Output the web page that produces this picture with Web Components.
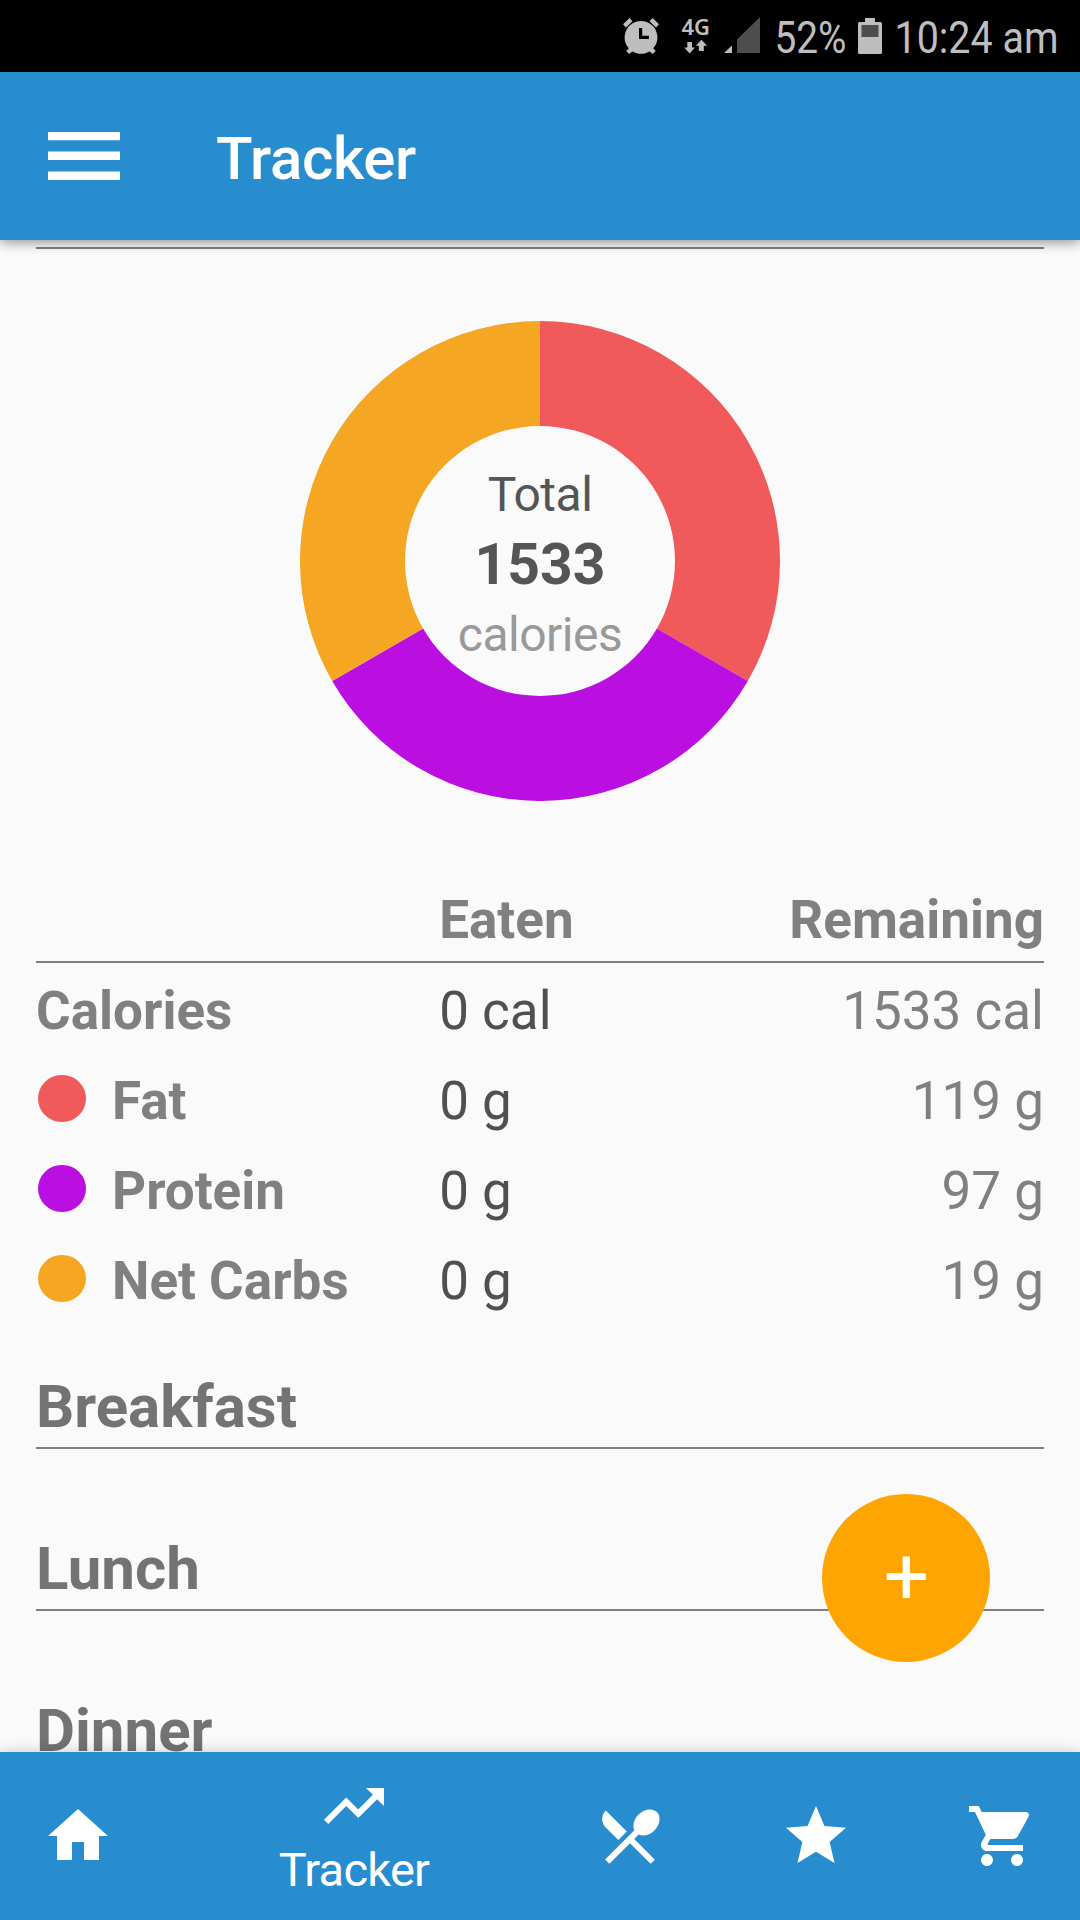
<!DOCTYPE html>
<html lang="en">
<head>
<meta charset="utf-8">
<title>Tracker</title>
<style>
body{margin:0;background:#fafafa;font-family:Roboto,"Liberation Sans",sans-serif}
</style>
</head>
<body>
<tracker-app></tracker-app>
<script>
function define(name, html){
  customElements.define(name, class extends HTMLElement{
    constructor(){
      super();
      this.attachShadow({mode:'open'}).innerHTML = typeof html === 'function' ? html(this) : html;
    }
  });
}

define('status-bar', `<style>
:host{display:block;height:72px;background:#000}
svg{display:block;overflow:visible}
text{font-family:Roboto,sans-serif;fill:#bebebe}
</style>
<svg width="1080" height="72" viewBox="0 0 1080 72" fill="#bebebe">
  <g>
    <path fill-rule="evenodd" d="M641 21a16.4 16.4 0 1 0 .01 0zM639 28h3.200v7.800h6.800v3.200h-10z"/>
    <path d="M629.500 18l3 3.200-6.500 6.300-3-3.300zM652.500 18l-3 3.200 6.500 6.300 3-3.300zM630 47l3.600 3.600-4.400 3.400-3-3zM652 47l-3.600 3.600 4.400 3.400 3-3z"/>
  </g>
  <text x="681.500" y="35.300" style="font-family:'Noto Sans','Open Sans',sans-serif;font-size:22px;font-weight:600" textLength="28.500" lengthAdjust="spacingAndGlyphs">4G</text>
  <path d="M687.300 42h4.700v5.500h3l-5.400 6-5.400-6h3.100zM698.800 51h5v-5.300h3.200l-5.500-6-5.800 6h3.100z"/>
  <path d="M732 45.500V53h-8z"/>
  <path fill="#4d4d4d" d="M760 17v36h-23V39.500z"/>
  <text x="774.500" y="53.300" font-size="45" textLength="72" lengthAdjust="spacingAndGlyphs">52%</text>
  <path d="M865 18h10v4h5.500q1.500 0 1.500 1.500v29q0 1.500-1.500 1.500h-21q-1.500 0-1.500-1.500v-29q0-1.500 1.500-1.500h5.500z"/>
  <path fill="#4d4d4d" d="M861.500 25h17v12h-17z"/>
  <text x="894.500" y="53.300" font-size="45" textLength="164" lengthAdjust="spacingAndGlyphs">10:24 am</text>
</svg>`);

define('app-bar', `<style>
:host{display:flex;align-items:center;height:168px;box-sizing:border-box;padding-left:48px;background:#288dcf;color:#fff;position:relative;z-index:2;box-shadow:0 2px 12px rgba(0,0,0,.45)}
svg{display:block;width:72px;height:48px}
h1{margin:5px 0 0 96px;font-size:60px;line-height:72px;font-weight:500;letter-spacing:-.35px}
</style>
<svg viewBox="0 0 72 48" fill="#fff"><path d="M0 0h72v8.300H0zM0 19.600h72v8.300H0zM0 39.600h72V48H0z"/></svg>
<h1><slot></slot></h1>`);

define('macro-donut', `<style>
:host{display:grid;justify-content:center;margin-top:72px}
svg,.mid{grid-area:1/1}
svg{display:block}
.mid{display:flex;flex-direction:column;align-items:center;padding-top:140.500px;font-size:48px;line-height:65px;color:#555;letter-spacing:-.5px}
b{font-size:57px;line-height:70px;margin:3px 0 2px;letter-spacing:0}
.unit{color:#999}
</style>
<svg width="480" height="480" viewBox="-240 -240 480 480">
  <path fill="#f15a5a" d="M0-240A240 240 0 0 1 207.850 120L116.900 67.500A135 135 0 0 0 0-135z"/>
  <path fill="#ba0fe0" d="M207.850 120A240 240 0 0 1-207.850 120L-116.900 67.500A135 135 0 0 0 116.900 67.500z"/>
  <path fill="#f5a623" d="M-207.850 120A240 240 0 0 1 0-240V-135A135 135 0 0 0-116.900 67.500z"/>
</svg>
<div class="mid"><slot name="top"></slot><b><slot></slot></b><span class="unit"><slot name="unit"></slot></span></div>`);

define('macro-head', `<style>
:host{display:grid;grid-template-columns:40% 20% 40%;margin-top:87px;height:73px;border-bottom:2px solid #808080;font-size:53px;line-height:64px;font-weight:700;color:#808080;margin-bottom:2.500px}
.r{text-align:right}
</style><span></span><span><slot name="eaten"></slot></span><span class="r"><slot name="left"></slot></span>`);

define('macro-row', el => `<style>
:host{display:grid;grid-template-columns:40% 20% 40%;height:90px;line-height:90px;font-size:53px;color:#808080}
.name{display:flex;align-items:center;font-weight:700;white-space:nowrap}
i{width:47.500px;height:47.500px;border-radius:50%;margin:0 26.500px 4.500px 2px;background:${el.getAttribute('dot')}}
.e{color:#505050}.r{text-align:right}
</style><span class="name">${el.hasAttribute('dot') ? '<i></i>' : ''}<slot></slot></span><span class="e"><slot name="eaten"></slot></span><span class="r"><slot name="left"></slot></span>`);

define('meal-section', `<style>
:host{display:block;padding:46.500px 0 4.500px;margin-bottom:39px;border-bottom:2px solid #808080;color:#737373}
h2{margin:0;font-size:60px;line-height:70px;font-weight:700}
</style><h2><slot></slot></h2>`);

define('add-button', `<style>
:host{display:flex;align-items:center;justify-content:center;position:absolute;left:822px;top:1494px;width:168px;height:168px;box-sizing:border-box;padding:0 0 3px 1px;border-radius:50%;background:#ffa502;color:#fff;z-index:1;font-size:80px;line-height:80px}
</style><slot></slot>`);

const icons = {
  home:'M10 20v-6h4v6h5v-8h3L12 3 2 12h3v8z',
  trend:'M16 6l2.290 2.290-4.880 4.880-4-4L2 16.590 3.410 18l6-6 4 4 6.300-6.290L22 12V6z',
  food:'M8.100 13.340l2.830-2.830L3.910 3.500c-1.560 1.560-1.560 4.090 0 5.660l4.190 4.180zm6.780-1.810c1.530.71 3.680.21 5.270-1.380 1.910-1.910 2.280-4.650.81-6.120-1.460-1.460-4.200-1.100-6.120.81-1.590 1.590-2.090 3.740-1.380 5.270L3.700 19.870l1.410 1.410L12 14.410l6.880 6.880 1.410-1.410L13.410 13l1.470-1.470z',
  star:'M12 17.270L18.180 21l-1.640-7.030L22 9.240l-7.190-.61L12 2 9.190 8.630 2 9.240l5.460 4.730L5.820 21z',
  cart:'M7 18c-1.100 0-1.990.9-1.990 2S5.900 22 7 22s2-.9 2-2-.9-2-2-2zM1 2v2h2l3.600 7.590-1.350 2.450c-.16.280-.25.610-.25.960 0 1.100.9 2 2 2h12v-2H7.420c-.14 0-.25-.11-.25-.25l.03-.12.900-1.630h7.450c.75 0 1.410-.41 1.750-1.030l3.580-6.490c.08-.14.12-.31.12-.48 0-.55-.45-1-1-1H5.210l-.94-2H1zm16 16c-1.100 0-1.990.9-1.990 2s.89 2 1.990 2 2-.9 2-2-.9-2-2-2z'
};
define('nav-item', el => `<style>
:host{display:flex;flex-direction:column;align-items:center;padding-top:48px;color:#fff;font-size:47px;line-height:58px;letter-spacing:-.75px}
:host([active]){padding-top:18px}
svg{display:block;width:72px;height:72px;flex:none}
span{margin-top:-1px}
</style><svg viewBox="0 0 24 24" fill="#fff"><path d="${icons[el.getAttribute('icon')]}"/></svg><span><slot></slot></span>`);

define('bottom-nav', `<style>
:host{display:grid;grid-template-columns:156px 396px 156px 216px 156px;height:168px;background:#288dcf;position:relative;z-index:2;box-shadow:0 0 14px rgba(0,0,0,.2)}
</style><slot></slot>`);

define('tracker-app', `<style>
:host{display:flex;flex-direction:column;width:1080px;height:1920px;overflow:hidden;position:relative;background:#fafafa}
main{flex:1;min-height:0;overflow:hidden;padding:0 36px}
hr{margin:7px 0 0;border:0;height:2px;background:#808080}
</style>
<status-bar></status-bar>
<app-bar>Tracker</app-bar>
<main>
  <hr>
  <macro-donut><span slot="top">Total</span>1533<span slot="unit">calories</span></macro-donut>
  <macro-head><span slot="eaten">Eaten</span><span slot="left">Remaining</span></macro-head>
  <macro-row>Calories<span slot="eaten">0 cal</span><span slot="left">1533 cal</span></macro-row>
  <macro-row dot="#f15a5a">Fat<span slot="eaten">0 g</span><span slot="left">119 g</span></macro-row>
  <macro-row dot="#ba0fe0">Protein<span slot="eaten">0 g</span><span slot="left">97 g</span></macro-row>
  <macro-row dot="#f5a623">Net Carbs<span slot="eaten">0 g</span><span slot="left">19 g</span></macro-row>
  <meal-section>Breakfast</meal-section>
  <meal-section>Lunch</meal-section>
  <meal-section>Dinner</meal-section>
</main>
<add-button>+</add-button>
<bottom-nav>
  <nav-item icon="home"></nav-item>
  <nav-item icon="trend" active>Tracker</nav-item>
  <nav-item icon="food"></nav-item>
  <nav-item icon="star"></nav-item>
  <nav-item icon="cart"></nav-item>
</bottom-nav>`);
</script>
</body>
</html>
